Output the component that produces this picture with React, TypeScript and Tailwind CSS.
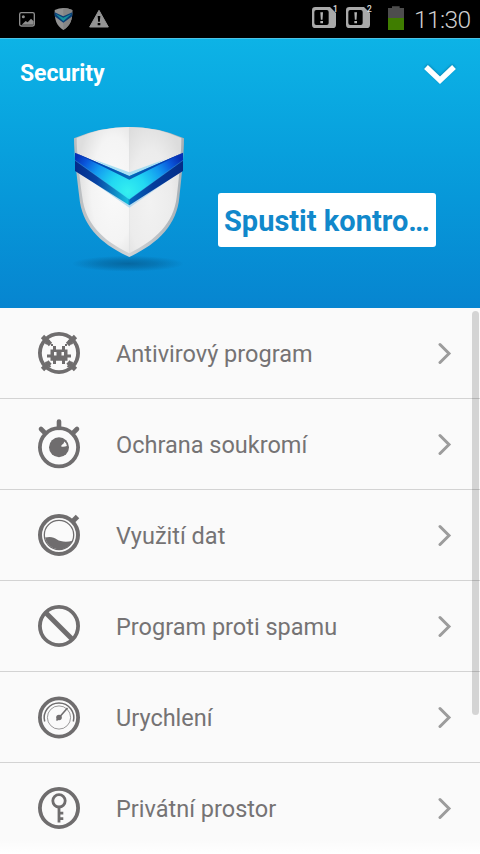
import type { ReactNode } from "react";

const GREY = "#6f6d6e";

function Icon({ children }: { children: ReactNode }) {
  return (
    <svg width="48" height="60" viewBox="0 0 48 60" fill="none" stroke={GREY} className="shrink-0">
      {children}
    </svg>
  );
}

function VirusIcon() {
  return (
    <Icon>
      <circle cx="24" cy="30" r="19.1" strokeWidth="3.8" />
      <path d="M7.5 13.5l8 8M40.5 13.5l-8 8M7.5 46.5l7.5-7.5M40.5 46.5l-7.5-7.5" strokeWidth="4.6" />
      <path d="M14.5 17l-4 4M33.5 17l4 4M10.5 39l5 5M37.5 39l-5 5" strokeWidth="2" />
      <g fill={GREY} stroke="none">
        <path d="M16 21h2v2h-2zM30 21h2v2h-2z" />
        <path d="M18 23h3v3.5h6V23h3v3.5h2.5v5H36v3h-3.5v3.2H30V41h-3v-3.3h-6V41h-3v-3.3h-2.5v-3.2H12v-3h3.5v-5H18z" />
      </g>
      <path d="M19 29h2.5v3.5H19zM26.5 29H29v3.5h-2.5z" fill="#fafafa" stroke="none" />
    </Icon>
  );
}

function EyeIcon() {
  return (
    <Icon>
      <circle cx="24" cy="33.3" r="19.1" strokeWidth="3.8" />
      <path d="M24 14V7.5M10 19l-4-4M38 19l4-4" strokeWidth="4.6" strokeLinecap="round" />
      <circle cx="24" cy="33.3" r="10" fill={GREY} stroke="none" />
      <path d="M29.3 27.5a6 6 0 0 1 2.6 4.6q-2.500 1-5.400.6-.8-1.200.5-2 2-.8 2.300-3.200z" fill="#fafafa" stroke="none" />
    </Icon>
  );
}

function DataIcon() {
  return (
    <Icon>
      <circle cx="24" cy="30" r="19" strokeWidth="4" />
      <circle cx="24" cy="30" r="14.7" strokeWidth="1.3" />
      <path d="M37 17l5.5-5.5" strokeWidth="5" />
      <path
        d="M10 32.5c6-1.5 9 0 12 2s9 3 15.5 1.3A14.5 14.5 0 0 1 10 32.5z"
        fill={GREY}
        stroke="none"
      />
    </Icon>
  );
}

function SpamIcon() {
  return (
    <Icon>
      <circle cx="24" cy="30" r="19.1" strokeWidth="3.8" />
      <path d="M11 17l26 26" strokeWidth="5" />
    </Icon>
  );
}

function BoostIcon() {
  return (
    <Icon>
      <circle cx="24" cy="30.5" r="19.1" strokeWidth="3.8" />
      <circle cx="24" cy="30.5" r="11.6" strokeWidth="0.7" />
      <path d="M9.7 34.5a14.8 14.8 0 1 1 28.6 0" strokeWidth="1.5" />
      <path d="M21.5 33.5l11-12.5" strokeWidth="1.6" />
      <circle cx="24" cy="30.5" r="2.8" fill={GREY} stroke="none" />
    </Icon>
  );
}

function KeyIcon() {
  return (
    <Icon>
      <circle cx="24" cy="30" r="19.1" strokeWidth="3.8" />
      <circle cx="24" cy="22.8" r="6.2" strokeWidth="2.8" />
      <path d="M24 29v15.6M24 35.2h4.3M24 40.7h4.3" strokeWidth="2.8" />
    </Icon>
  );
}

const items = [
  { label: "Antivirový program", icon: <VirusIcon /> },
  { label: "Ochrana soukromí", icon: <EyeIcon /> },
  { label: "Využití dat", icon: <DataIcon /> },
  { label: "Program proti spamu", icon: <SpamIcon /> },
  { label: "Urychlení", icon: <BoostIcon /> },
  { label: "Privátní prostor", icon: <KeyIcon /> },
];

function SimIcon({ slot }: { slot: string }) {
  return (
    <svg width="27" height="38" viewBox="0 0 81 114" className="shrink-0">
      <path d="M13 21h44l18 18v35q0 10-10 10H13q-10 0-10-10V31q0-10 10-10z" fill="#a9a9a9" />
      <rect x="10" y="30" width="43" height="45" rx="6" fill="#000" />
      <path d="M28 37h8l-1.5 22h-5zM28 63h8v7h-8z" fill="#b4b4b4" />
      <text x="66" y="36" fontSize="25" fontWeight="500" fill="#e0e0e0" fontFamily="Roboto, sans-serif">
        {slot}
      </text>
    </svg>
  );
}

function StatusBar() {
  return (
    <div className="flex h-[38px] shrink-0 bg-black pl-[18px]">
      <svg width="18" height="38" viewBox="54 0 54 114" className="shrink-0">
        <rect x="59" y="38" width="44" height="40" rx="5" fill="none" stroke="#8e8e8e" strokeWidth="4" />
        <circle cx="70" cy="50" r="4.5" fill="#8e8e8e" />
        <path d="M65 74l12-11 6 4 10-11 8 8v10z" fill="#8e8e8e" />
      </svg>
      <svg width="19" height="38" viewBox="162 0 57 114" className="ml-[18px] shrink-0">
        <path d="M164 30q26-12 53 0c0 30-5 46-27 60-22-14-26-30-26-60z" fill="#929292" />
        <path d="M190 24q14 0 27 6c0 30-5 46-27 60z" fill="#858585" />
        <path d="M164 37l26 12 27-12v12l-27 19-26-19z" fill="#0b3f78" />
        <path d="M166 41l24 12 25-12-25 23z" fill="#178f9c" />
      </svg>
      <svg width="22" height="38" viewBox="264 0 66 114" className="ml-[15px] shrink-0">
        <path d="M297 31l28 50h-56z" fill="#949494" stroke="#949494" strokeWidth="3" strokeLinejoin="round" />
        <path d="M293 48h8l-1.5 17h-5zM293 69h8v7h-8z" fill="#000" />
      </svg>
      <div className="ml-[201px] flex gap-[7px]">
        <SimIcon slot="1" />
        <SimIcon slot="2" />
      </div>
      <svg width="18" height="38" viewBox="261 0 54 114" className="ml-[15px] shrink-0">
        <path d="M264 24h12v-5h23v5h13v66h-48z" fill="#4d4d4d" />
        <path d="M264 54h48v36h-48z" fill="#3f7d00" />
      </svg>
      <span className="ml-[9px] whitespace-nowrap text-[24.5px] font-light leading-[40px] tracking-[-0.6px] text-[#d0d0d0]">
        11:30
      </span>
    </div>
  );
}

function Shield() {
  return (
    <svg width="140" height="170" viewBox="0 0 420 510" className="shrink-0">
      <defs>
        <linearGradient id="rim" x1="0" x2="1" y1="0" y2="0">
          <stop offset="0" stopColor="#b9bdc0" />
          <stop offset="0.5" stopColor="#d0d3d6" />
          <stop offset="1" stopColor="#a8b0b6" />
        </linearGradient>
        <radialGradient id="faceLeft" cx="0.7" cy="0.5" r="0.7">
          <stop offset="0" stopColor="#fafafa" />
          <stop offset="0.6" stopColor="#f4f4f4" />
          <stop offset="1" stopColor="#dedede" />
        </radialGradient>
        <radialGradient id="faceRight" cx="0.4" cy="0.6" r="0.7">
          <stop offset="0" stopColor="#f2f2f2" />
          <stop offset="0.6" stopColor="#ececec" />
          <stop offset="1" stopColor="#dcdcdc" />
        </radialGradient>
        <radialGradient id="band" gradientUnits="userSpaceOnUse" cx="203" cy="245" r="185">
          <stop offset="0" stopColor="#35f0f0" />
          <stop offset="0.3" stopColor="#22d8f2" />
          <stop offset="0.6" stopColor="#139af0" />
          <stop offset="0.82" stopColor="#0a58dc" />
          <stop offset="1" stopColor="#0630b4" />
        </radialGradient>
        <linearGradient id="edge" x1="0" x2="1" y1="0" y2="0">
          <stop offset="0" stopColor="#042b8a" />
          <stop offset="0.2" stopColor="#0844a4" />
          <stop offset="0.49" stopColor="#14bbdc" />
          <stop offset="0.51" stopColor="#0668bd" />
          <stop offset="0.72" stopColor="#053d9c" />
          <stop offset="1" stopColor="#042c88" />
        </linearGradient>
        <linearGradient id="notch" x1="0" x2="1" y1="0" y2="0">
          <stop offset="0" stopColor="#0428a8" />
          <stop offset="0.5" stopColor="#0668b8" />
          <stop offset="1" stopColor="#0428a8" />
        </linearGradient>
        <radialGradient id="shadow">
          <stop offset="0" stopColor="#056198" stopOpacity="0.85" />
          <stop offset="0.5" stopColor="#056198" stopOpacity="0.5" />
          <stop offset="1" stopColor="#056198" stopOpacity="0" />
        </radialGradient>
      </defs>
      <ellipse cx="204" cy="461" rx="168" ry="24" fill="url(#shadow)" />
      <path
        d="M42 85Q118 51 208 51T372 85C372 125 366 190 358 262C351 345 292 403 208 441C122 403 65 345 58 262C49 190 42 125 42 85z"
        fill="url(#rim)"
      />
      <path d="M50 84Q124 51 208 51V430C128 392 76 340 67 262C57 190 50 125 50 84z" fill="url(#faceLeft)" />
      <path d="M208 51Q290 51 364 84C364 125 359 190 350 262C341 340 286 392 208 430z" fill="url(#faceRight)" />
      <path d="M50 182L208 284L366 182L208 293z" fill="#a9d5ee" opacity="0.8" />
      <path d="M100 148L208 187L316 148L208 206z" fill="#9bdcf2" opacity="0.85" />
      <path d="M45 148L208 265L369 148V183L208 286L45 183z" fill="url(#edge)" />
      <path d="M45 128L208 198L369 128V151L208 268L45 151z" fill="url(#band)" />
      <path d="M45 128L208 198L369 128L208 209z" fill="url(#notch)" />
      <path d="M45 151L208 268L369 151" fill="none" stroke="#59d8f5" strokeWidth="2" opacity="0.5" />
    </svg>
  );
}

function Header() {
  return (
    <header className="h-[270px] shrink-0 border-t border-[#4cc3e6] bg-linear-to-b from-[#0db3e6] to-[#0785d0]">
      <div className="flex h-[71px] items-center justify-between pl-5 pr-[23px]">
        <h1 className="text-[23px] font-bold tracking-[-0.1px] text-white">Security</h1>
        <svg width="34" height="24" viewBox="0 0 34 24" className="drop-shadow-[0_-1px_1px_rgba(0,60,90,0.35)]">
          <path d="M3 4l14 13.3 14-13.3" fill="none" stroke="#fff" strokeWidth="5.5" />
        </svg>
      </div>
      <div className="flex pl-[60px]">
        <Shield />
        <button className="ml-[18px] mt-[83px] h-[54px] w-[218px] truncate rounded-[3px] bg-white pl-1.5 pt-[3px] text-left text-[29px] font-bold text-[#1188cb]">
          Spustit kontro…
        </button>
      </div>
    </header>
  );
}

export default function App() {
  return (
    <div className="flex h-[854px] w-[480px] flex-col overflow-hidden bg-[#fafafa] font-[Roboto,sans-serif]">
      <StatusBar />
      <Header />
      <main className="relative">
        <ul>
          {items.map((item) => (
            <li
              key={item.label}
              className="flex h-[91px] items-center border-b border-[#d3d3d3] pl-[35px] pr-7 last:border-transparent"
            >
              {item.icon}
              <span className="ml-[33px] flex-1 whitespace-nowrap pt-1 text-[23.5px] text-[#757374]">
                {item.label}
              </span>
              <svg width="14" height="22" viewBox="0 0 14 22" fill="none" stroke="#9c9c9c" strokeWidth="3">
                <path d="M2 2.5l9 9-9 9" strokeLinecap="round" />
              </svg>
            </li>
          ))}
        </ul>
        {/* fading edge under the last row */}
        <div className="absolute inset-x-0 bottom-0 h-4 bg-linear-to-b from-white/0 to-white" />
        {/* scroll thumb */}
        <div className="absolute right-px top-[3px] h-[404px] w-[7px] rounded-full bg-black/15" />
      </main>
    </div>
  );
}
